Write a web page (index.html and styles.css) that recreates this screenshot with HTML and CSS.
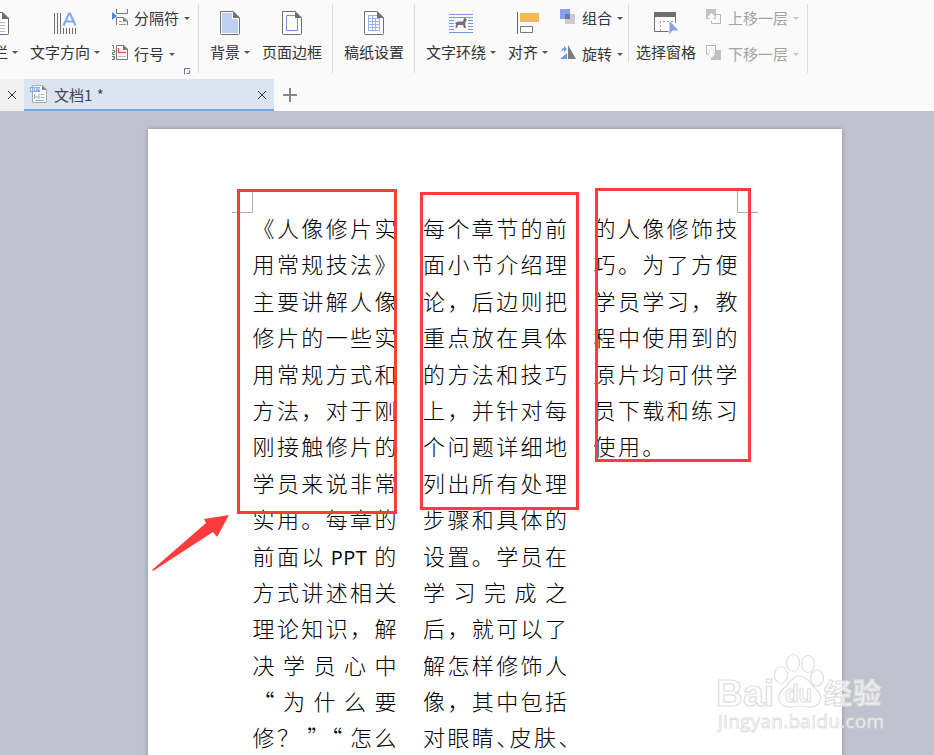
FILE: index.html
```html
<!DOCTYPE html>
<html lang="zh-CN">
<head>
<meta charset="utf-8">
<title>文档1</title>
<link rel="stylesheet" href="styles.css">
</head>
<body>
<div class="app">
  <header class="ribbon">
    <section class="group layout">
      <button class="big columns"><svg width="9" height="26" viewBox="0 0 9 26"><path d="M-8 2.5H3L8.500 8V23.500Q8.500 24.500 7.500 24.500H-8" fill="#fff" stroke="#6b6b6b"/><path d="M2 2V9H9Z" fill="#6b6b6b"/><path d="M-2 12.500H5M-2 15.500H5M-2 18.500H5M-2 21.500H5" stroke="#bbb"/></svg><span>栏<i class="caret"></i></span></button>
      <button class="big direction"><svg width="24" height="26" viewBox="0 0 24 26"><path d="M1.5 3V24M4.5 3V24M7.5 3V24M10.500 18V24M13.500 18V24M16.500 18V24M19.500 18V24M22.500 18V24" stroke="#6d6d6d"/><path d="M10.500 15.500L16 3.500H17L22.500 15.500M12.500 11.500H20.500" fill="none" stroke="#7fa9ed" stroke-width="2"/></svg><span>文字方向<i class="caret"></i></span></button>
      <div class="stack">
        <button class="small"><svg width="17" height="18" viewBox="0 0 17 18"><path d="M0 3V11L5 7Z" fill="#4d86d8"/><path d="M4.500 0V4.500H15.500V0M4.500 16V8.500H12L15.500 12V16" fill="none" stroke="#777"/><path d="M11 8.500V12.500H15.500Z" fill="#777"/><path d="M7 12.500H10M7 15.500H14" stroke="#999"/></svg>分隔符<i class="caret"></i></button>
        <button class="small"><svg width="17" height="18" viewBox="0 0 17 18"><path d="M4.500 .5H12L15.500 4V14.500H4.500Z" fill="#fff" stroke="#777"/><path d="M11 0V5H16Z" fill="#777"/><path d="M6.500 3V7.500H14" fill="none" stroke="#ed5050" stroke-width="1.300"/><path d="M6 11.500H14" stroke="#bbb"/><path d="M0 .5H1.500V4M0 5.500H2.500V7.500H.5V9.500H3M0 11.500H2.500V14.500H0M1 13H2" fill="none" stroke="#555" stroke-width=".8"/></svg>行号<i class="caret"></i></button>
      </div>
      <svg class="launcher" width="6" height="6" viewBox="0 0 6 6"><path d="M.5 6V.5H6" fill="none" stroke="#6f7795"/><path d="M2.500 5.500H5.500V2.500" fill="none" stroke="#6f7795"/></svg>
    </section>
    <section class="group backdrop">
      <button class="big"><svg width="20" height="26" viewBox="0 0 20 26"><path d="M.5 1.500H13L19.500 8V23.500Q19.500 24.500 18.500 24.500H1.500Q.5 24.500 .5 23.500Z" fill="#fff" stroke="#707070"/><path d="M2 3H12V9H18V23H2Z" fill="#bed0f1"/><path d="M13 1V8H20Z" fill="#707070"/></svg><span>背景<i class="caret"></i></span></button>
      <button class="big"><svg width="20" height="26" viewBox="0 0 20 26"><path d="M.5 1.500H13L19.500 8V23.500Q19.500 24.500 18.500 24.500H1.500Q.5 24.500 .5 23.500Z" fill="#fff" stroke="#707070"/><path d="M4.500 5.500H15.500V20.500H4.500Z" fill="none" stroke="#7096de"/><path d="M13 1V8H20Z" fill="#707070"/></svg><span>页面边框</span></button>
    </section>
    <section class="group manuscript">
      <button class="big"><svg width="20" height="26" viewBox="0 0 20 26"><path d="M.5 1.500H13L19.500 8V23.500Q19.500 24.500 18.500 24.500H1.500Q.5 24.500 .5 23.500Z" fill="#fff" stroke="#707070"/><path d="M4 5.500H13M4 8.500H16M4 11.500H16M4 14.500H16M4 17.500H16M4 20.500H16M4.500 5V21M8.500 5V21M11.500 8V21M15.500 8V21" stroke="#98b3e7"/><path d="M13 1V8H20Z" fill="#707070"/></svg><span>稿纸设置</span></button>
    </section>
    <section class="group arrange">
      <button class="big wrap"><svg width="24" height="26" viewBox="0 0 24 26"><path d="M0 4.500H24M0 7.500H24M0 10.500H5M0 13.500H5M0 16.500H5M0 19.500H5M19 10.500H24M19 13.500H24M19 16.500H24M19 19.500H24M0 22.500H24" stroke="#7299df"/><path d="M6 13L9 11.500H14L15 8H16L18 9.500L17 11L16 14L17 18H15L14 15L9 15L8 18H6.500L7 14Z" fill="#707070"/></svg><span>文字环绕<i class="caret"></i></span></button>
      <button class="big align"><svg width="24" height="26" viewBox="0 0 24 26"><path d="M2.500 2V24" stroke="#666"/><path d="M5 3H24V12H5Z" fill="#f3b959"/><path d="M5.500 16.500H17.500V22.500H5.500Z" fill="#fff" stroke="#777"/></svg><span>对齐<i class="caret"></i></span></button>
      <div class="stack">
        <button class="small"><svg width="16" height="18" viewBox="0 0 16 18"><path d="M0 0H10V10H0Z" fill="#8aa1e7"/><path d="M5 5H15V15H5Z" fill="#ccc"/><path d="M5 5H10V10H5Z" fill="#667cad"/></svg>组合<i class="caret"></i></button>
        <button class="small"><svg width="16" height="18" viewBox="0 0 16 18"><path d="M8 0L16 14H8Z" fill="#7c7c7c"/><path d="M7 8V14H0ZM1 7Q2 3 4 3V1L7 4L4 7V5Q3 5 1 7" fill="#6b9be5"/></svg>旋转<i class="caret"></i></button>
      </div>
    </section>
    <section class="group selection">
      <button class="big"><svg width="24" height="26" viewBox="0 0 24 26" overflow="visible"><path d="M14.500 21.500H.5V3.500H21.500V13" fill="none" stroke="#707070"/><path d="M0 2H22V7H0Z" fill="#707070"/><path d="M6.500 21V11.500H22" fill="none" stroke="#999" stroke-dasharray="2 2"/><path d="M15.500 11V24.500L18.500 20.500H24.500Z" fill="#8aa1e7"/></svg><span>选择窗格</span></button>
      <div class="stack disabled">
        <button class="small"><svg width="16" height="18" viewBox="0 0 16 18"><path d="M0 0H10V10H0Z" fill="#c1c1c1"/><path d="M10 5.500H14.500V14.500H5.500V10" fill="none" stroke="#b4b4b4"/><path d="M5.500 4L10 8.500H7.500V12H3.500V8.500H1Z" fill="#fff"/></svg>上移一层<i class="caret"></i></button>
        <button class="small"><svg width="16" height="18" viewBox="0 0 16 18"><path d="M5 5H15V15H5Z" fill="#c1c1c1"/><path d="M.5 .5H9.500V9.500H.5Z" fill="#fff" stroke="#b4b4b4"/><path d="M3.500 4H7.500V8.500H10L5.500 13L1 8.500H3.500Z" fill="#fff" stroke="#ccc" stroke-width=".6"/></svg>下移一层<i class="caret"></i></button>
      </div>
    </section>
  </header>
  <nav class="tabs">
    <div class="prev"><svg width="8" height="8" viewBox="0 0 8 8"><path d="M0 0L8 8M8 0L0 8" stroke="#333"/></svg></div>
    <div class="tab">
      <svg width="18" height="20" viewBox="0 0 18 20"><path d="M2.500 1.500H12L16.500 6V18.500H2.500Z" fill="#fff" stroke="#aaa"/><path d="M12 1V6H17Z" fill="#888"/><path d="M0 3H10V8H0Z" fill="#7fb3e8"/><path d="M1.500 4V7M3.500 4V7M5.500 4V7M5.500 5H7.500M9 4V6" stroke="#fff" stroke-width=".8"/><path d="M4.500 10V14.500L6.500 12L9 14.500V10M11 10.500H14M11 13.500H14M5 16.500H14" fill="none" stroke="#78aee6"/></svg>
      <span class="name">文档1 <span class="star">*</span></span>
      <svg class="close" width="8" height="8" viewBox="0 0 8 8"><path d="M0 0L8 8M8 0L0 8" stroke="#333"/></svg>
    </div>
    <svg class="add" width="14" height="14" viewBox="0 0 14 14"><path d="M7 0V14M0 7H14" stroke="#888" stroke-width="2"/></svg>
  </nav>
  <main class="canvas">
    <article class="page">
      <div class="column">
        <p>《人像修片实</p><p>用常规技法》</p><p>主要讲解人像</p><p>修片的一些实</p><p>用常规方式和</p><p>方法，对于刚</p><p>刚接触修片的</p><p>学员来说非常</p><p>实用。每章的</p><p>前面以<span class="latin">PPT</span>的</p><p>方式讲述相关</p><p>理论知识，解</p><p class="loose">决学员心中</p><p class="loose">“为什么要</p><p>修？<span class="quotes">”“</span>怎么</p>
      </div>
      <div class="column">
        <p>每个章节的前</p><p>面小节介绍理</p><p>论，后边则把</p><p>重点放在具体</p><p>的方法和技巧</p><p>上，并针对每</p><p>个问题详细地</p><p>列出所有处理</p><p>步骤和具体的</p><p>设置。学员在</p><p class="loose">学习完成之</p><p>后，就可以了</p><p>解怎样修饰人</p><p>像，其中包括</p><p class="tight">对眼睛、皮肤、</p>
      </div>
      <div class="column">
        <p>的人像修饰技</p><p>巧。为了方便</p><p>学员学习，教</p><p>程中使用到的</p><p>原片均可供学</p><p>员下载和练习</p><p>使用。</p>
      </div>
    </article>
  </main>
  <svg class="marks" width="934" height="755" viewBox="0 0 934 755">
    <path d="M252.500 191V212.500H232M737.500 191V212.500H758" fill="none" stroke="#aaa"/>
    <g fill="none" stroke="#fc3b3b" stroke-width="3"><rect x="238.500" y="190.500" width="157" height="322"/><rect x="421.500" y="193.500" width="156" height="315"/><rect x="596.500" y="189.500" width="153" height="271"/></g>
    <path d="M152 570L206 523L204 519L229 515L217 537L213 532L153 571Z" fill="#fc3b3b"/>
  </svg>
  <svg class="watermark" width="180" height="90" viewBox="0 0 180 90">
    <g fill="#fff" fill-opacity=".72" stroke="#dedede" stroke-width="1.200">
      <ellipse cx="69" cy="45" rx="6.500" ry="8.500"/><ellipse cx="81" cy="33" rx="6.500" ry="8.500"/><ellipse cx="96" cy="34" rx="6.500" ry="8.500"/><ellipse cx="105" cy="48" rx="6.500" ry="8"/>
      <path d="M87 46C95 46 98 54 104 59C114 69 106 78 96 77Q88 75 80 77C67 78 63 67 71 59C77 54 80 46 87 46Z"/>
      <text class="logo" x="4" y="76" textLength="58" lengthAdjust="spacingAndGlyphs">Bai</text>
      <text class="du" x="73" y="72" textLength="27" lengthAdjust="spacingAndGlyphs">du</text>
      <text class="word" x="112" y="74" textLength="57">经验</text>
    </g>
    <text class="url" x="6" y="98" textLength="166">jingyan.baidu.com</text>
  </svg>
</div>
</body>
</html>
```
FILE: styles.css
```css
* { box-sizing: border-box; }
body { margin: 0; overflow: hidden; font-family: "Noto Sans CJK SC", sans-serif; }
svg { display: block; flex: none; }
.app { position: relative; width: 934px; height: 755px; display: flex; flex-direction: column; overflow: hidden; background: #c0c3cd; }
.ribbon { height: 79px; display: flex; background: #fafafa; color: #333; flex: none; }
button { all: unset; display: flex; white-space: nowrap; font-size: 15px; line-height: 22px; }
.group { position: relative; display: flex; height: 69px; margin-top: 4px; border-right: 1px solid #dcdcdc; flex: none; }
.big { flex-direction: column; align-items: center; padding-top: 6px; gap: 5px; }
.big span { display: flex; align-items: center; }
.caret { border: 3px solid transparent; border-top-color: #555; border-bottom: 0; margin-left: 4px; }
.stack { display: flex; flex-direction: column; gap: 14px; padding-top: 3px; }
.small { align-items: center; gap: 5px; }
.small .caret { margin-left: 0; }
.layout { width: 199px; }
.columns { width: 18px; align-items: flex-start; }
.columns span { margin-left: -7px; }
.direction { width: 70px; margin-left: 12px; }
.direction svg, .wrap svg { align-self: flex-start; margin-left: 23px; }
.layout .stack { margin-left: 12px; }
.launcher { position: absolute; right: 8px; bottom: -1px; }
.backdrop { width: 134px; padding-left: 11px; gap: 12px; }
.manuscript { width: 82px; padding-left: 11px; }
.arrange { width: 214px; padding-left: 11px; height: 58px; }
.align { margin-left: 12px; }
.align svg { align-self: flex-start; margin-left: 7px; }
.arrange .stack { margin-left: 12px; }
.arrange .small { gap: 6px; }
.arrange .small .caret, .disabled .small .caret { margin-left: -1px; }
.selection { width: 179px; padding-left: 7px; }
.selection .stack { margin-left: 10px; }
.disabled { color: #a3a3a3; }
.disabled .small { gap: 6px; }
.disabled .caret { border-top-color: #c4c4c4; }
.tabs { height: 32px; display: flex; background: #fafafa; flex: none; align-items: center; }
.prev { width: 24px; height: 32px; background: #f1f1f1; display: flex; align-items: center; justify-content: center; }
.tab { width: 250px; height: 32px; padding: 0 8px 0 6px; display: flex; align-items: center; gap: 6px; background: #dbe5f1; border-bottom: 2px solid #76a5dc; color: #444; font-size: 15px; }
.name { flex: 1; }
.star { margin-left: 1px; }
.close { margin-top: 2px; }
.add { margin-left: 9px; }
.canvas { flex: 1; padding: 18px 0 0 148px; }
.page { width: 694px; height: 640px; padding: 80px 0 0 104.500px; display: flex; background: #fff; box-shadow: 0 0 5px #8b8f9c; }
.column { width: 170.500px; flex: none; }
.column p { margin: 0; height: 36.400px; line-height: 36.400px; font-size: 22px; font-weight: 300; letter-spacing: 2.400px; white-space: nowrap; color: #000; text-spacing-trim: space-all; }
.column .loose { letter-spacing: 8.500px; }
.column .tight { font-feature-settings: "halt"; }
.latin { font-family: "Open Sans", sans-serif; font-weight: 400; font-size: 20px; letter-spacing: 0.500px; margin: 0 7px 0 5px; }
.quotes { display: inline-block; width: 48.800px; padding-left: 6px; letter-spacing: -9px; }
.marks { position: absolute; left: 0; top: 0; }
.watermark { position: absolute; left: 712px; top: 630px; overflow: visible; }
.logo, .du { font-family: "Liberation Sans", sans-serif; font-weight: 700; font-size: 36px; }
.du { font-size: 24px; }
.word { font-weight: 700; font-size: 28px; }
.url { font-family: "Open Sans", sans-serif; font-size: 19px; fill: #fff; fill-opacity: .8; stroke: #dedede; stroke-width: .8px; }
```
